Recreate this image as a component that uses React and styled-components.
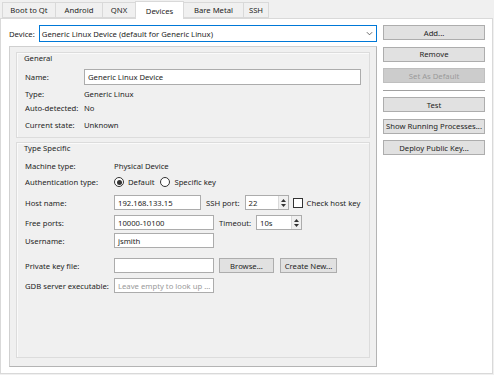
import styled, { createGlobalStyle } from "styled-components";

const GlobalStyle = createGlobalStyle`
  body {
    margin: 0;
    background: #f0f0f0;
    font-family: "Noto Sans", "Liberation Sans", sans-serif;
    font-size: 7.7px;
    color: #1e1e1e;
  }
`;

const TABS = [
  { name: "Boot to Qt", w: 54 },
  { name: "Android", w: 48 },
  { name: "QNX", w: 34 },
  { name: "Devices", w: 49 },
  { name: "Bare Metal", w: 61 },
  { name: "SSH", w: 26 },
];

export default function App() {
  return (
    <Window>
      <GlobalStyle />
      <TabBar>
        {TABS.map((t) => (
          <Tab key={t.name} $w={t.w} $active={t.name === "Devices"}>
            {t.name}
          </Tab>
        ))}
      </TabBar>
      <Page>
        <LeftCol>
          <DeviceRow>
            <span>Device:</span>
            <Combo>
              Generic Linux Device (default for Generic Linux)
              <Chevron viewBox="0 0 8 5">
                <path d="M1 1 L4 4 L7 1" fill="none" stroke="#555" strokeWidth="1" />
              </Chevron>
            </Combo>
          </DeviceRow>
          <Panel>
            <Group>
              <Row $h={10}>
                <Title>General</Title>
              </Row>
              <Row $h={16} $mt={6}>
                <Label $w={59}>Name:</Label>
                <Field $w={278}>Generic Linux Device</Field>
              </Row>
              <Row $h={14} $mt={2}>
                <Label $w={59}>Type:</Label>
                <span>Generic Linux</span>
              </Row>
              <Row $h={14}>
                <Label $w={59}>Auto-detected:</Label>
                <span>No</span>
              </Row>
              <Row $h={14} $mt={3}>
                <Label $w={59}>Current state:</Label>
                <span>Unknown</span>
              </Row>
            </Group>
            <Group $grow>
              <Row $h={10}>
                <Title>Type Specific</Title>
              </Row>
              <Row $h={14} $mt={6}>
                <Label $w={89}>Machine type:</Label>
                <span>Physical Device</span>
              </Row>
              <Row $h={16} $mt={1}>
                <Label $w={89}>Authentication type:</Label>
                <Radio $checked />
                <OptText>Default</OptText>
                <Radio />
                <OptText>Specific key</OptText>
              </Row>
              <Row $h={15} $mt={5}>
                <Label $w={89}>Host name:</Label>
                <Field $w={87}>192.168.133.15</Field>
                <InlineLabel $ml={5}>SSH port:</InlineLabel>
                <Spin $w={44}>
                  22
                  <SpinArrows />
                </Spin>
                <Check />
                <span>Check host key</span>
              </Row>
              <Row $h={15} $mt={5}>
                <Label $w={89}>Free ports:</Label>
                <Field $w={100}>10000-10100</Field>
                <InlineLabel $ml={5}>Timeout:</InlineLabel>
                <Spin $w={46}>
                  10s
                  <SpinArrows />
                </Spin>
              </Row>
              <Row $h={15} $mt={3}>
                <Label $w={89}>Username:</Label>
                <Field $w={100}>jsmith</Field>
              </Row>
              <Row $h={15} $mt={10}>
                <Label $w={89}>Private key file:</Label>
                <Field $w={100} />
                <SmallButton $ml={5} $w={55}>Browse...</SmallButton>
                <SmallButton $ml={6} $w={57}>Create New...</SmallButton>
              </Row>
              <Row $h={15} $mt={5}>
                <Label $w={89}>GDB server executable:</Label>
                <Field $w={100} $placeholder>
                  Leave empty to look up ...
                </Field>
              </Row>
            </Group>
          </Panel>
        </LeftCol>
        <RightCol>
          <Button>Add...</Button>
          <Button>Remove</Button>
          <Button disabled>Set As Default</Button>
          <Separator />
          <Button>Test</Button>
          <Button>Show Running Processes...</Button>
          <Button>Deploy Public Key...</Button>
        </RightCol>
      </Page>
    </Window>
  );
}

function SpinArrows() {
  return (
    <Arrows>
      <svg width="7" height="12" viewBox="0 0 7 12">
        <path d="M1 5 L3.5 2 L6 5 Z" fill="#333" />
        <path d="M1 7 L3.5 10 L6 7 Z" fill="#333" />
      </svg>
    </Arrows>
  );
}

const Window = styled.div`
  width: 494px;
  height: 375px;
  background: #f0f0f0;
  display: flex;
  flex-direction: column;
`;

const TabBar = styled.div`
  display: flex;
  align-items: flex-end;
  height: 18px;
  padding-left: 3px;
  position: relative;
  z-index: 1;
`;

const Tab = styled.div`
  width: ${(p) => p.$w}px;
  box-sizing: border-box;
  height: ${(p) => (p.$active ? "18px" : "16px")};
  margin-bottom: ${(p) => (p.$active ? "-1px" : "0")};
  display: flex;
  align-items: center;
  justify-content: center;
  background: ${(p) => (p.$active ? "#ffffff" : "#f0f0f0")};
  border: 1px solid #d9d9d9;
  border-bottom: ${(p) => (p.$active ? "none" : "1px solid #d9d9d9")};
  margin-left: -1px;
  color: #1e1e1e;
`;

const Page = styled.div`
  height: 356px;
  box-sizing: border-box;
  background: #ffffff;
  border: 1px solid #d9d9d9;
  margin-right: 1px;
  padding: 6px 0 0 8px;
  display: flex;
  gap: 6px;
`;

const LeftCol = styled.div`
  width: 368px;
  display: flex;
  flex-direction: column;
`;

const DeviceRow = styled.div`
  display: flex;
  align-items: center;
  height: 17px;
  gap: 4px;
`;

const Combo = styled.div`
  flex: 1;
  height: 17px;
  box-sizing: border-box;
  border: 1px solid #0078d7;
  background: #fff;
  display: flex;
  align-items: center;
  padding-left: 2px;
`;

const Chevron = styled.svg`
  width: 7px;
  height: 5px;
  margin-left: auto;
  margin-right: 3px;
`;

const Panel = styled.div`
  margin-top: 4px;
  height: 321px;
  box-sizing: border-box;
  border: 1px solid #b4b4b4;
  border-top-color: #d0d0d0;
  border-left-color: #d0d0d0;
  background: #f0f0f0;
  padding: 5px 6px 8px 6px;
  display: flex;
  flex-direction: column;
  gap: 4px;
`;

const Group = styled.div`
  border: 1px solid #dcdcdc;
  box-shadow: inset 1px 1px 0 #fafafa;
  padding: 0 8px 5px 8px;
  display: flex;
  flex-direction: column;
  flex: ${(p) => (p.$grow ? "1" : "none")};
`;

const Title = styled.span`
  margin-left: -1px;
`;

const Row = styled.div`
  display: flex;
  align-items: center;
  height: ${(p) => p.$h}px;
  margin-top: ${(p) => p.$mt || 0}px;
  white-space: nowrap;
`;

const Label = styled.span`
  width: ${(p) => p.$w}px;
  flex: none;
`;

const InlineLabel = styled.span`
  margin-left: ${(p) => p.$ml}px;
  margin-right: 5px;
`;

const Field = styled.div`
  width: ${(p) => p.$w}px;
  height: 100%;
  box-sizing: border-box;
  border: 1px solid #acacac;
  background: #fff;
  display: flex;
  align-items: center;
  padding-left: 3px;
  color: ${(p) => (p.$placeholder ? "#9a9a9a" : "#1e1e1e")};
`;

const Spin = styled(Field)`
  padding-right: 0;
`;

const Arrows = styled.div`
  margin-left: auto;
  width: 9px;
  height: 100%;
  display: flex;
  align-items: center;
  justify-content: center;
  background: #f0f0f0;
  border-left: 1px solid #dadada;
`;

const Radio = styled.span`
  width: 10px;
  height: 10px;
  box-sizing: border-box;
  border-radius: 50%;
  border: 1px solid #333;
  background: #fff;
  display: inline-flex;
  align-items: center;
  justify-content: center;
  margin-right: 4px;

  &::after {
    content: "";
    width: 5px;
    height: 5px;
    border-radius: 50%;
    background: ${(p) => (p.$checked ? "#333" : "transparent")};
  }
`;

const OptText = styled.span`
  margin-right: 6px;
`;

const Check = styled.span`
  width: 10px;
  height: 10px;
  box-sizing: border-box;
  border: 1px solid #333;
  background: #fff;
  margin: 0 4px 0 4px;
`;

const SmallButton = styled.div`
  width: ${(p) => p.$w}px;
  height: 100%;
  box-sizing: border-box;
  margin-left: ${(p) => p.$ml}px;
  border: 1px solid #adadad;
  background: #e1e1e1;
  display: flex;
  align-items: center;
  justify-content: center;
`;

const RightCol = styled.div`
  width: 102px;
  display: flex;
  flex-direction: column;
  gap: 6.5px;
`;

const Button = styled.button`
  height: 15px;
  padding: 0;
  box-sizing: border-box;
  border: 1px solid ${(p) => (p.disabled ? "#bfbfbf" : "#adadad")};
  background: ${(p) => (p.disabled ? "#cccccc" : "#e1e1e1")};
  color: ${(p) => (p.disabled ? "#9a9a9a" : "#1e1e1e")};
  font: inherit;
  white-space: nowrap;
`;

const Separator = styled.div`
  height: 1px;
  background: #a0a0a0;
`;
